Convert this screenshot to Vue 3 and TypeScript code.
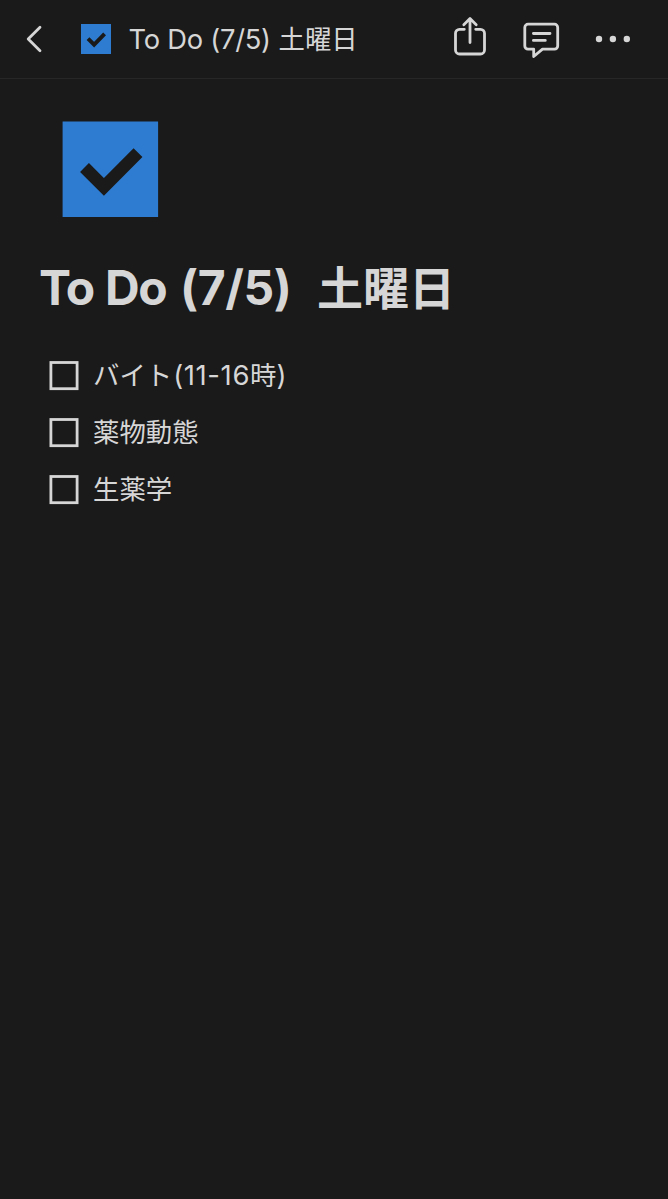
<script setup lang="ts">
interface Run {
  text: string
  kind: 'latin' | 'cjk' | 'kana'
}
interface Todo {
  id: number
  runs: Run[]
}

const todos: Todo[] = [
  {
    id: 1,
    runs: [
      { text: 'バイト', kind: 'kana' },
      { text: '(11-16', kind: 'latin' },
      { text: '時', kind: 'cjk' },
      { text: ')', kind: 'latin' },
    ],
  },
  { id: 2, runs: [{ text: '薬物動態', kind: 'cjk' }] },
  { id: 3, runs: [{ text: '生薬学', kind: 'cjk' }] },
]
</script>

<template>
  <div class="page">
    <header class="bar">
      <svg class="back" width="20" height="32" viewBox="0 0 20 32">
        <path d="M16 4.2 4.2 16 16 27.8" />
      </svg>
      <svg class="badge" width="30" height="30" viewBox="0 0 96 96">
        <rect width="96" height="96" />
        <path d="M22.5 46.5 42 66 75.5 31.5" />
      </svg>
      <div class="crumb">
        <span class="latin">To Do (7/5)</span><span class="cjk">土曜日</span>
      </div>
      <svg class="share" width="34" height="42" viewBox="0 0 34 42">
        <path d="M11.3 13.3H6.5a4 4 0 0 0-4 4V34a4 4 0 0 0 4 4h21a4 4 0 0 0 4-4V17.3a4 4 0 0 0-4-4h-4.8" />
        <path d="M17 26.5V3M10.8 8.7 17 2.6l6.2 6.1" />
      </svg>
      <svg class="comment" width="38" height="38" viewBox="0 0 38 38">
        <path d="M6 3.2H32.5a3.2 3.2 0 0 1 3.2 3.2V25a3.2 3.2 0 0 1-3.2 3.2H20.500L11.700 35.500V28.200H6a3.200 3.200 0 0 1-3.200-3.200V6.400A3.200 3.200 0 0 1 6 3.200Z" />
        <path d="M11.400 12.500H28M11.400 19.400H23.300" />
      </svg>
      <svg class="more" width="36" height="8" viewBox="0 0 36 8">
        <circle cx="4" cy="4" r="3.2" />
        <circle cx="17.9" cy="4" r="3.2" />
        <circle cx="31.8" cy="4" r="3.2" />
      </svg>
    </header>

    <main class="content">
      <svg class="cover" width="97" height="96" viewBox="0 0 97 96">
        <rect width="95.500" height="95.500" x="0.600" y="0.500" />
        <path d="M22.500 46.500 41.900 66 76 31.700" />
      </svg>
      <h1 class="title">
        <span class="words">To Do </span><span class="date">(7/5)</span><span class="cjk">土曜日</span>
      </h1>
      <ul class="list">
        <li v-for="todo in todos" :key="todo.id" class="item">
          <svg class="box" width="30" height="30" viewBox="0 0 30 30">
            <rect x="1.900" y="1.500" width="26.200" height="26.200" />
          </svg>
          <span class="label"><span v-for="(run, i) in todo.runs" :key="i" :class="run.kind">{{ run.text }}</span></span>
        </li>
      </ul>
    </main>
  </div>
</template>

<style>
body {
  background: #1a1a1a;
}
</style>

<style scoped>
.page {
  min-height: 1199px;
  background: #1a1a1a;
  color: #d6d6d6;
  font-family: Inter, "Noto Sans CJK JP", sans-serif;
}
.bar {
  box-sizing: border-box;
  height: 79px;
  border-bottom: 1px solid #272727;
  display: flex;
  align-items: center;
}
svg {
  display: block;
  flex: none;
}
.back,
.share,
.comment {
  fill: none;
  stroke: #d6d6d6;
  stroke-width: 2.8;
  stroke-linecap: round;
  stroke-linejoin: round;
}
.back {
  margin-left: 24px;
}
.badge rect,
.cover rect {
  fill: #2e7cd1;
}
.badge path,
.cover path {
  fill: none;
  stroke: #1a1a1a;
  stroke-width: 12.5;
}
.badge {
  margin-left: 37px;
}
.crumb {
  margin-left: 17.5px;
  width: 324.5px;
  display: flex;
  align-items: baseline;
  line-height: 40px;
  white-space: nowrap;
}
.crumb .latin {
  font-size: 27.3px;
  letter-spacing: -0.25px;
  width: 150px;
}
.crumb .cjk {
  font-size: 26.4px;
}
.share {
  margin-top: -5px;
}
.comment {
  margin-left: 35px;
  margin-top: 2px;
}
.more {
  margin-left: 35px;
  fill: #d6d6d6;
}
.content {
  padding: 42px 40px 0;
}
.cover {
  margin-left: 22px;
}
.title {
  margin: 39px 0 0;
  height: 64px;
  display: flex;
  align-items: baseline;
  line-height: 64px;
  font-size: 48px;
  font-weight: 700;
  white-space: nowrap;
}
.title .words {
  letter-spacing: -1.5px;
  word-spacing: 1.5px;
  margin-left: -1px;
  width: 141px;
}
.title .date {
  letter-spacing: -0.4px;
  width: 137px;
}
.title .cjk {
  font-size: 46px;
}
.list {
  list-style: none;
  margin: 27px 0 0;
  padding: 0 0 0 9px;
}
.item {
  height: 57px;
  display: flex;
  align-items: center;
}
.box {
  fill: none;
  stroke: #d6d6d6;
  stroke-width: 2.8;
}
.label {
  margin-left: 14px;
  margin-top: -2px;
  display: flex;
  align-items: baseline;
  line-height: 40px;
  white-space: nowrap;
}
.label .latin {
  font-size: 27.5px;
  letter-spacing: 0.6px;
}
.label .kana + .latin {
  margin-left: 1px;
}
.label .cjk,
.label .kana {
  font-size: 26.4px;
}
</style>
